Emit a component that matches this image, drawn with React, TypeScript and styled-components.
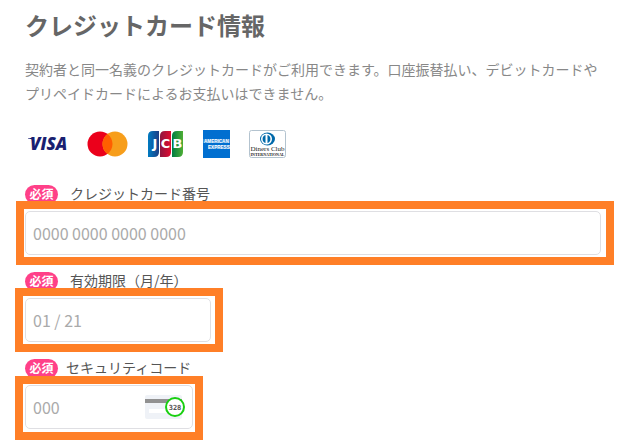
import React from 'react';
import styled, { createGlobalStyle } from 'styled-components';

const GlobalStyle = createGlobalStyle`
  * { box-sizing: border-box; }
  body {
    margin: 0;
    background: #fff;
    color: #555;
    font-family: 'Noto Sans CJK JP', sans-serif;
    font-size: 14px;
  }
`;

const Page = styled.main`
  padding: 7px 34px 16px 25px;
`;

const Title = styled.h1`
  margin: 0;
  color: #666;
  font-size: 24px;
  font-weight: 700;
  line-height: 36px;
`;

const Lead = styled.p`
  margin: 14px 0 0;
  color: #888;
  line-height: 24px;
`;

const Brands = styled.ul`
  display: flex;
  align-items: center;
  gap: 19px;
  height: 28px;
  margin: 25px 0 24px;
  padding: 0 3px;
  list-style: none;
`;

const Brand = styled.li`
  display: flex;
  flex: none;
`;

const Fields = styled.form`
  display: flex;
  flex-direction: column;
  gap: 14px;
`;

const Field = styled.div`
  display: flex;
  flex-direction: column;
  gap: 7px;
`;

const Label = styled.label<{ $gap: number }>`
  display: flex;
  align-items: flex-end;
  gap: ${(p) => p.$gap}px;
  height: 22px;
  line-height: 22px;
`;

const Required = styled.span`
  width: 33px;
  height: 19px;
  border-radius: 10px;
  background: #ff4088;
  color: #fff;
  font-size: 12px;
  font-weight: 700;
  line-height: 17px;
  text-align: center;
`;

const Control = styled.div<{ $width: string; $inset: string }>`
  position: relative;
  width: ${(p) => p.$width};
  max-width: 100%;

  &::after {
    content: '';
    position: absolute;
    inset: ${(p) => p.$inset};
    border: 8px solid #ff7f27;
    pointer-events: none;
  }
`;

const Input = styled.input`
  display: block;
  width: 100%;
  height: 44px;
  padding: 0 7px;
  border: 1px solid #dfdfe3;
  border-radius: 5px;
  background: #fff;
  color: #555;
  font: inherit;
  font-size: 16px;

  &::placeholder {
    color: #aaa;
    opacity: 1;
  }
`;

const CodeHint = styled.span`
  position: absolute;
  top: 10px;
  right: 8px;
  display: flex;
`;

const Visa = () => (
  <svg width="40" height="28" viewBox="0 0 40 28" role="img" aria-label="VISA">
    <text x="2" y="20" fill="#1a1f71" fontFamily="'Open Sans', sans-serif" fontSize="17" fontWeight="800" fontStyle="italic">VISA</text>
    <path d="M0 8h5l1.500 3.500C4.500 9.500 2.500 9 0 8.600z" fill="#1a1f71" />
  </svg>
);

const Mastercard = () => (
  <svg width="42" height="28" viewBox="0 0 42 28" role="img" aria-label="Mastercard">
    <circle cx="13" cy="14" r="12.500" fill="#eb001b" />
    <circle cx="28" cy="14" r="12.500" fill="#f79e1b" />
    <path d="M20.500 4a12.500 12.500 0 0 1 0 20a12.500 12.500 0 0 1 0-20z" fill="#ff5f00" />
  </svg>
);

const Jcb = () => (
  <svg width="36" height="28" viewBox="0 0 36 28" role="img" aria-label="JCB">
    <defs>
      <linearGradient id="jcb-blue"><stop stopColor="#007bc1" /><stop offset="1" stopColor="#1c3f86" /></linearGradient>
      <linearGradient id="jcb-red"><stop stopColor="#8e1740" /><stop offset="1" stopColor="#e20b30" /></linearGradient>
      <linearGradient id="jcb-green"><stop stopColor="#007d43" /><stop offset="1" stopColor="#4fae35" /></linearGradient>
    </defs>
    <path d="M5 1h6v21q0 5-5 5H0V6q0-5 5-5z" fill="url(#jcb-blue)" />
    <path d="M17 1h6v21q0 5-5 5h-6V6q0-5 5-5z" fill="url(#jcb-red)" />
    <path d="M29 1h6v21q0 5-5 5h-6V6q0-5 5-5z" fill="url(#jcb-green)" />
    <g fill="#fff" fontFamily="'DejaVu Sans', sans-serif" fontSize="13" fontWeight="700" textAnchor="middle">
      <text x="7" y="18">J</text>
      <text x="17.500" y="18">C</text>
      <text x="29.500" y="18">B</text>
    </g>
  </svg>
);

const Amex = () => (
  <svg width="27" height="28" viewBox="0 0 27 28" role="img" aria-label="American Express">
    <path d="M0 0h27v28H0z" fill="#016fd0" />
    <path d="M0 9h27v4H0zM5 15h22v4H5z" fill="#6fb0e6" opacity=".5" />
    <g fill="#fff" fontFamily="'Liberation Sans', sans-serif" fontWeight="700" fontSize="4.600">
      <text x="1" y="13">AMERICAN</text>
      <text x="5" y="19">EXPRESS</text>
    </g>
  </svg>
);

const Diners = () => (
  <svg width="38" height="28" viewBox="0 0 38 28" role="img" aria-label="Diners Club International">
    <rect x=".5" y=".5" width="36" height="27" rx="2" fill="#fff" stroke="#b3c3cf" />
    <ellipse cx="18.500" cy="9" rx="7.500" ry="6.500" fill="#0069aa" />
    <circle cx="17.500" cy="9" r="5.500" fill="#fff" />
    <path d="M16.500 5a4.200 4.200 0 0 0 0 8zM18.500 5a4.200 4.200 0 0 1 0 8z" fill="#0069aa" />
    <g fill="#222" fontFamily="'Liberation Serif', serif" textAnchor="middle">
      <text x="18.500" y="21" fontSize="7">Diners Club</text>
      <text x="18.500" y="25.500" fontSize="4" fontWeight="700">INTERNATIONAL</text>
    </g>
  </svg>
);

const CardCode = () => (
  <svg width="40" height="24" viewBox="0 0 40 24" aria-hidden="true">
    <rect width="37" height="24" rx="2" fill="#eff2f7" />
    <path d="M0 4h37v4H0z" fill="#919191" />
    <path d="M4 14h18v4H4z" fill="#fff" />
    <circle cx="30" cy="12" r="9" fill="#fff" stroke="#18cf10" strokeWidth="2" />
    <text x="30" y="14.500" fill="#555" fontFamily="'DejaVu Sans Mono', monospace" fontSize="7" fontWeight="700" textAnchor="middle">328</text>
  </svg>
);

const brands = [Visa, Mastercard, Jcb, Amex, Diners];

type CardFieldProps = {
  id: string;
  label: string;
  placeholder: string;
  width: string;
  inset: string;
  labelGap?: number;
  children?: React.ReactNode;
};

const CardField = ({ id, label, placeholder, width, inset, labelGap = 12, children }: CardFieldProps) => (
  <Field>
    <Label htmlFor={id} $gap={labelGap}>
      <Required>必須</Required>
      {label}
    </Label>
    <Control $width={width} $inset={inset}>
      <Input id={id} type="text" inputMode="numeric" placeholder={placeholder} required />
      {children}
    </Control>
  </Field>
);

export default function App() {
  return (
    <>
      <GlobalStyle />
      <Page>
        <Title>クレジットカード情報</Title>
        <Lead>
          契約者と同一名義のクレジットカードがご利用できます。口座振替払い、デビットカードやプリペイドカードによるお支払いはできません。
        </Lead>
        <Brands>
          {brands.map((Logo, i) => (
            <Brand key={i}><Logo /></Brand>
          ))}
        </Brands>
        <Fields>
          <CardField id="number" label="クレジットカード番号" placeholder="0000 0000 0000 0000" width="100%" inset="-10px -13px -10px -9px" />
          <CardField id="expiry" label="有効期限（月/年）" placeholder="01 / 21" width="186px" inset="-10px -12px -10px -10px" />
          <CardField id="code" label="セキュリティコード" placeholder="000" width="168px" inset="-9px -10px -11px -10px" labelGap={8}>
            <CodeHint><CardCode /></CodeHint>
          </CardField>
        </Fields>
      </Page>
    </>
  );
}
